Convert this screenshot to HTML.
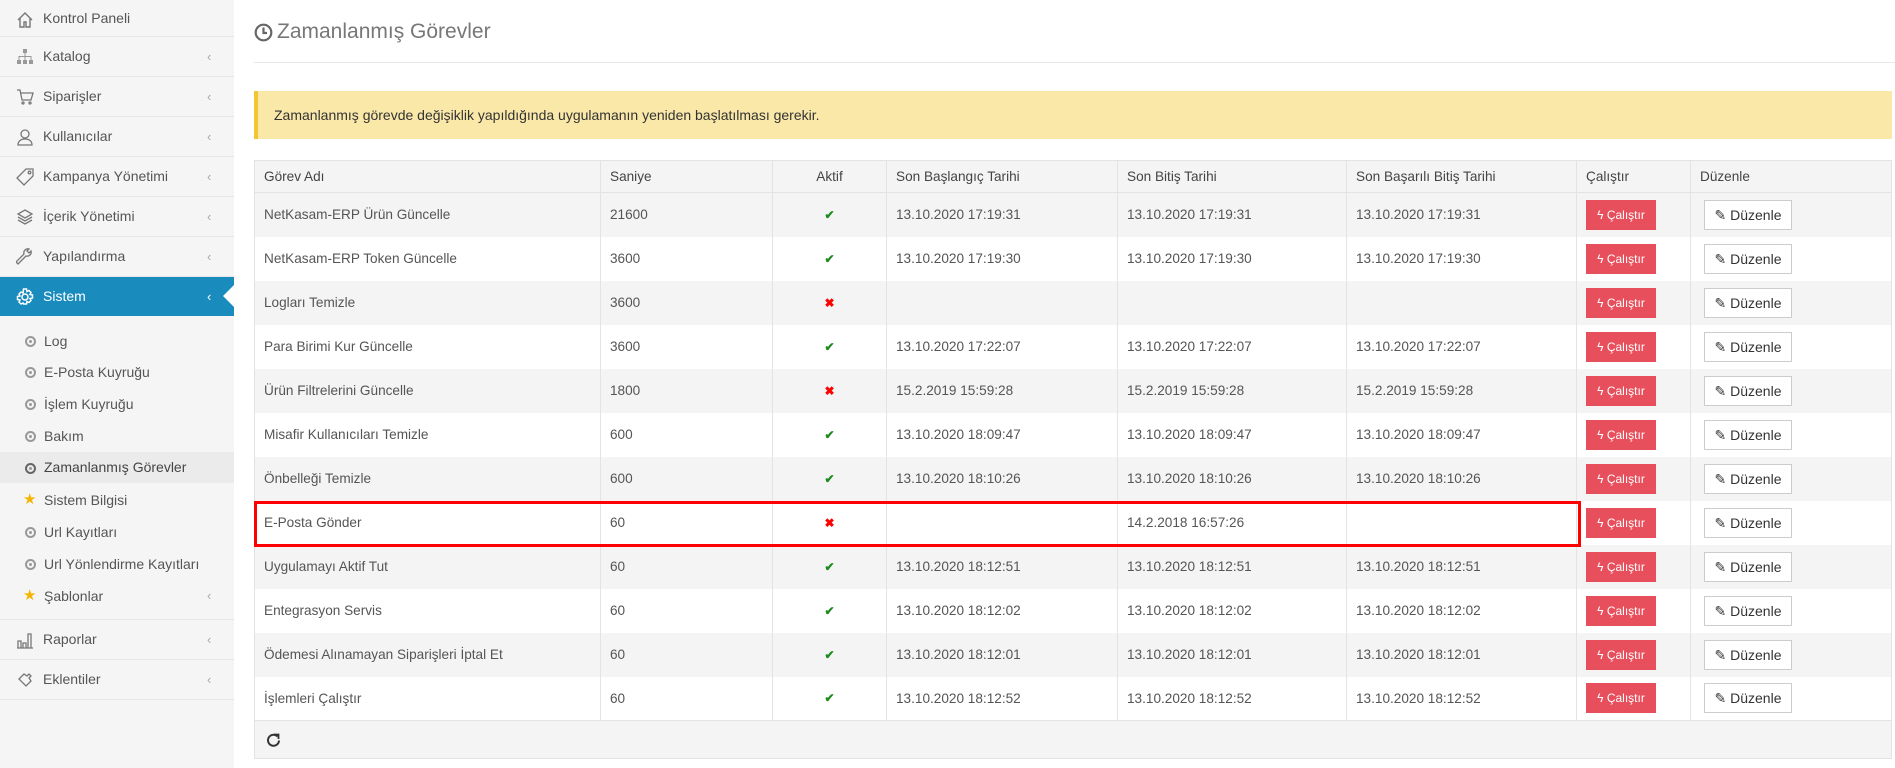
<!DOCTYPE html>
<html><head><meta charset="utf-8">
<style>
*{box-sizing:border-box;margin:0;padding:0}
body{width:1895px;height:768px;overflow:hidden;background:#fff;font-family:"Liberation Sans",sans-serif;color:#555;font-size:14px;position:relative}
#sb{position:absolute;left:0;top:0;width:234px;height:768px;background:#f5f5f5}
.it{position:absolute;left:0;width:234px;height:40px;border-bottom:1px solid #e6e6e6;line-height:39px;padding-left:43px;color:#555;font-size:14px}
.it svg{position:absolute;left:16px;top:11px}
.chev{position:absolute;left:207px;top:0;color:#aaa;font-size:13px}
.act{background:#1a8bbd;color:#fff;border-bottom:none}
.act .chev{color:#fff}
.sub{position:absolute;left:0;width:234px;height:32px;line-height:32px;padding-left:44px;font-size:14px;color:#555}
.sub .ic{position:absolute;left:25px;top:11px;width:11px;height:11px;border:2px solid #999;border-radius:50%}
.sub .ic:after{content:"";position:absolute;left:2px;top:2px;width:3px;height:3px;background:#999;border-radius:50%}
.sub .st{position:absolute;left:23px;top:0;color:#f4b400;font-size:15px}
.hl{background:#ebebeb}
#title{position:absolute;left:277px;top:20px;font-size:21px;color:#777;font-weight:300}
#hr{position:absolute;left:254px;right:0;top:62px;height:1px;background:#e8e8e8}
#alert{position:absolute;left:254px;width:1638px;top:91px;height:48px;background:#f9e8a8;border-left:4px solid #f3c530;color:#333;padding-left:16px;line-height:48px;font-size:14px}
table{position:absolute;left:254px;top:160px;width:1638px;border-collapse:collapse;border:1px solid #e3e3e3}
td,th{border-left:1px solid #e3e3e3;padding:0 9px;text-align:left;font-weight:normal;white-space:nowrap;font-size:13.6px;color:#555}
th{height:32px;background:#f4f4f4;border-bottom:1px solid #e3e3e3;color:#444}
td{height:44px}
tr:nth-child(even) td{background:#f4f4f4}
.c{text-align:center}
.ok{color:#1f8a1f;font-size:12px;font-weight:bold}
.no{color:#f00;font-size:12px;font-weight:bold}
.b1{display:inline-block;width:70px;height:30px;line-height:30px;background:#e84f5c;color:#fff;font-size:12px;text-align:center;vertical-align:middle}
.b2{display:inline-block;width:88px;height:30px;line-height:28px;border:1px solid #ccc;background:#fff;color:#333;font-size:14px;text-align:center;margin-left:4px;vertical-align:middle}
#foot{position:absolute;left:254px;top:721px;width:1638px;height:38px;background:#f4f4f4;border:1px solid #e3e3e3;border-top:none}
#red{position:absolute;left:254px;top:501px;width:1327px;height:46px;border:3px solid #f00}
</style></head><body>
<div id="sb">
<div class="it" style="top:0;height:37px;line-height:36px"><svg width="18" height="18" viewBox="0 0 18 18" fill="none" stroke="#777" stroke-width="1.4"><path d="M2 9L9 2l7 7M4 7v9h4v-5h2v5h4V7"/></svg>Kontrol Paneli</div>
<div class="it" style="top:37px"><svg width="18" height="18" viewBox="0 0 18 18" fill="#999"><rect x="7" y="1" width="4" height="4"/><rect x="1" y="12" width="4" height="4"/><rect x="7" y="12" width="4" height="4"/><rect x="13" y="12" width="4" height="4"/><path d="M8.5 5h1v3h6v4h-1V9H9.5v3h-1V9H3.5v3h-1V8h6z"/></svg>Katalog<span class="chev">&lsaquo;</span></div>
<div class="it" style="top:77px"><svg width="18" height="18" viewBox="0 0 18 18" fill="none" stroke="#777" stroke-width="1.3"><path d="M1 2h3l2 10h9l2-7H5"/><circle cx="7" cy="15" r="1"/><circle cx="14" cy="15" r="1"/></svg>Siparişler<span class="chev">&lsaquo;</span></div>
<div class="it" style="top:117px"><svg width="18" height="18" viewBox="0 0 18 18" fill="none" stroke="#777" stroke-width="1.3"><circle cx="9" cy="6" r="4"/><path d="M2 17c0-4 3-6 7-6s7 2 7 6z"/></svg>Kullanıcılar<span class="chev">&lsaquo;</span></div>
<div class="it" style="top:157px"><svg width="18" height="18" viewBox="0 0 18 18" fill="none" stroke="#777" stroke-width="1.3"><path d="M10 1h7v7l-9 9-7-7z"/><circle cx="13.5" cy="4.5" r="1.3"/></svg>Kampanya Yönetimi<span class="chev">&lsaquo;</span></div>
<div class="it" style="top:197px"><svg width="18" height="18" viewBox="0 0 18 18" fill="none" stroke="#777" stroke-width="1.3"><path d="M9 2l7 4-7 4-7-4zM2 9l7 4 7-4M2 12l7 4 7-4"/></svg>İçerik Yönetimi<span class="chev">&lsaquo;</span></div>
<div class="it" style="top:237px"><svg width="18" height="18" viewBox="0 0 18 18" fill="none" stroke="#777" stroke-width="1.3"><path d="M2 16l8-8a4 4 0 0 0 5-5l-2 2-2-2 2-2a4 4 0 0 0-5 5l-8 8z"/></svg>Yapılandırma<span class="chev">&lsaquo;</span></div>
<div class="it act" style="top:277px;height:39px"><svg width="18" height="18" viewBox="0 0 18 18" fill="none" stroke="#fff" stroke-width="1.5"><circle cx="9" cy="9" r="3"/><path d="M7.5 1h3l.5 2.5 2-1 2 2-1 2 2.5.5v3l-2.5.5 1 2-2 2-2-1-.5 2.5h-3L7 15l-2 1-2-2 1-2-2.5-.5v-3L4 8 3 6l2-2 2 1z"/></svg>Sistem<span class="chev">&lsaquo;</span><span style="position:absolute;right:0;top:8px;width:0;height:0;border-top:11px solid transparent;border-bottom:11px solid transparent;border-right:11px solid #fff"></span></div>
<div class="sub" style="top:325px"><span class="ic"></span>Log</div>
<div class="sub" style="top:356px"><span class="ic"></span>E-Posta Kuyruğu</div>
<div class="sub" style="top:388px"><span class="ic"></span>İşlem Kuyruğu</div>
<div class="sub" style="top:420px"><span class="ic"></span>Bakım</div>
<div class="sub hl" style="top:452px;height:31px;line-height:31px;color:#444"><span class="ic" style="border-color:#666"></span>Zamanlanmış Görevler</div>
<div class="sub" style="top:484px"><span class="st">★</span>Sistem Bilgisi</div>
<div class="sub" style="top:516px"><span class="ic"></span>Url Kayıtları</div>
<div class="sub" style="top:548px"><span class="ic"></span>Url Yönlendirme Kayıtları</div>
<div class="sub" style="top:580px"><span class="st">★</span>Şablonlar<span class="chev">&lsaquo;</span></div>
<div style="position:absolute;top:619px;left:0;width:234px;height:1px;background:#e6e6e6"></div>
<div class="it" style="top:620px"><svg width="18" height="18" viewBox="0 0 18 18" fill="none" stroke="#777" stroke-width="1.3"><path d="M1 17h16M2 10h3v7H2zM7 12h3v5H7zM12 3h3v14h-3z"/></svg>Raporlar<span class="chev">&lsaquo;</span></div>
<div class="it" style="top:660px"><svg width="18" height="18" viewBox="0 0 18 18" fill="none" stroke="#777" stroke-width="1.3"><path d="M3 8l5-5 3 2 2-2 2 2-2 2 2 3-5 5z"/></svg>Eklentiler<span class="chev">&lsaquo;</span></div>
</div>

<svg style="position:absolute;left:254px;top:23px" width="19" height="19" viewBox="0 0 19 19" fill="none" stroke="#666" stroke-width="2.2"><circle cx="9.5" cy="9.5" r="7.8"/><path d="M9.5 4.5v5.5H13"/></svg>
<div id="title">Zamanlanmış Görevler</div>
<div id="hr"></div>
<div id="alert">Zamanlanmış görevde değişiklik yapıldığında uygulamanın yeniden başlatılması gerekir.</div>

<table>
<colgroup><col style="width:346px"><col style="width:172px"><col style="width:114px"><col style="width:231px"><col style="width:229px"><col style="width:230px"><col style="width:114px"><col></colgroup>
<tr><th>Görev Adı</th><th>Saniye</th><th class="c">Aktif</th><th>Son Başlangıç Tarihi</th><th>Son Bitiş Tarihi</th><th>Son Başarılı Bitiş Tarihi</th><th>Çalıştır</th><th>Düzenle</th></tr>
<tr><td>NetKasam-ERP Ürün Güncelle</td><td>21600</td><td class="c ok">✔</td><td>13.10.2020 17:19:31</td><td>13.10.2020 17:19:31</td><td>13.10.2020 17:19:31</td><td><span class="b1">ϟ Çalıştır</span></td><td><span class="b2">✎ Düzenle</span></td></tr>
<tr><td>NetKasam-ERP Token Güncelle</td><td>3600</td><td class="c ok">✔</td><td>13.10.2020 17:19:30</td><td>13.10.2020 17:19:30</td><td>13.10.2020 17:19:30</td><td><span class="b1">ϟ Çalıştır</span></td><td><span class="b2">✎ Düzenle</span></td></tr>
<tr><td>Logları Temizle</td><td>3600</td><td class="c no">✖</td><td></td><td></td><td></td><td><span class="b1">ϟ Çalıştır</span></td><td><span class="b2">✎ Düzenle</span></td></tr>
<tr><td>Para Birimi Kur Güncelle</td><td>3600</td><td class="c ok">✔</td><td>13.10.2020 17:22:07</td><td>13.10.2020 17:22:07</td><td>13.10.2020 17:22:07</td><td><span class="b1">ϟ Çalıştır</span></td><td><span class="b2">✎ Düzenle</span></td></tr>
<tr><td>Ürün Filtrelerini Güncelle</td><td>1800</td><td class="c no">✖</td><td>15.2.2019 15:59:28</td><td>15.2.2019 15:59:28</td><td>15.2.2019 15:59:28</td><td><span class="b1">ϟ Çalıştır</span></td><td><span class="b2">✎ Düzenle</span></td></tr>
<tr><td>Misafir Kullanıcıları Temizle</td><td>600</td><td class="c ok">✔</td><td>13.10.2020 18:09:47</td><td>13.10.2020 18:09:47</td><td>13.10.2020 18:09:47</td><td><span class="b1">ϟ Çalıştır</span></td><td><span class="b2">✎ Düzenle</span></td></tr>
<tr><td>Önbelleği Temizle</td><td>600</td><td class="c ok">✔</td><td>13.10.2020 18:10:26</td><td>13.10.2020 18:10:26</td><td>13.10.2020 18:10:26</td><td><span class="b1">ϟ Çalıştır</span></td><td><span class="b2">✎ Düzenle</span></td></tr>
<tr><td>E-Posta Gönder</td><td>60</td><td class="c no">✖</td><td></td><td>14.2.2018 16:57:26</td><td></td><td><span class="b1">ϟ Çalıştır</span></td><td><span class="b2">✎ Düzenle</span></td></tr>
<tr><td>Uygulamayı Aktif Tut</td><td>60</td><td class="c ok">✔</td><td>13.10.2020 18:12:51</td><td>13.10.2020 18:12:51</td><td>13.10.2020 18:12:51</td><td><span class="b1">ϟ Çalıştır</span></td><td><span class="b2">✎ Düzenle</span></td></tr>
<tr><td>Entegrasyon Servis</td><td>60</td><td class="c ok">✔</td><td>13.10.2020 18:12:02</td><td>13.10.2020 18:12:02</td><td>13.10.2020 18:12:02</td><td><span class="b1">ϟ Çalıştır</span></td><td><span class="b2">✎ Düzenle</span></td></tr>
<tr><td>Ödemesi Alınamayan Siparişleri İptal Et</td><td>60</td><td class="c ok">✔</td><td>13.10.2020 18:12:01</td><td>13.10.2020 18:12:01</td><td>13.10.2020 18:12:01</td><td><span class="b1">ϟ Çalıştır</span></td><td><span class="b2">✎ Düzenle</span></td></tr>
<tr><td>İşlemleri Çalıştır</td><td>60</td><td class="c ok">✔</td><td>13.10.2020 18:12:52</td><td>13.10.2020 18:12:52</td><td>13.10.2020 18:12:52</td><td><span class="b1">ϟ Çalıştır</span></td><td><span class="b2">✎ Düzenle</span></td></tr>
</table>
<div id="foot"><svg style="position:absolute;left:11px;top:12px" width="15" height="15" viewBox="0 0 15 15" fill="none" stroke="#333" stroke-width="2"><path d="M11.5 3.5A5.5 5.5 0 1 0 13 7.5"/><path d="M8 1.5h4.5V6" stroke-width="1.8"/></svg></div>
<div id="red"></div>
</body></html>
